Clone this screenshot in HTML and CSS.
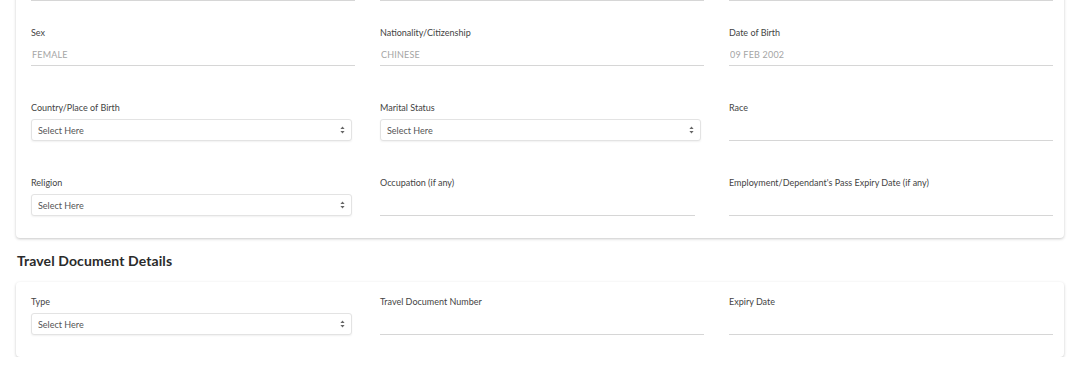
FILE: index.html
```html
<!DOCTYPE html>
<html lang="en">
<head>
  <meta charset="UTF-8" />
  <title>Applicant Particulars</title>
  <link rel="stylesheet" href="styles.css">
</head>
<body>

<!-- Personal particulars (scrolled, top row cut off) -->
<div class="card card-top">
  <div class="form-grid form-grid-cut">
    <div class="field"><span class="label-gap"></span><input type="text" class="line-input"></div>
    <div class="field"><span class="label-gap"></span><input type="text" class="line-input"></div>
    <div class="field"><span class="label-gap"></span><input type="text" class="line-input"></div>
  </div>

  <div class="form-grid">
    <div class="field">
      <label>Sex</label>
      <input type="text" class="line-input" value="FEMALE" readonly>
    </div>
    <div class="field">
      <label>Nationality/Citizenship</label>
      <input type="text" class="line-input" value="CHINESE" readonly>
    </div>
    <div class="field">
      <label>Date of Birth</label>
      <input type="text" class="line-input" value="09 FEB 2002" readonly>
    </div>

    <div class="field">
      <label>Country/Place of Birth</label>
      <div class="select-wrap">
        <select><option>Select Here</option></select>
        <svg class="caret" width="5" height="8" viewBox="0 0 5 8"><path d="M2.5 0.5L4.6 3H0.4z M2.5 7.5L4.6 5H0.4z" fill="#666"/></svg>
      </div>
    </div>
    <div class="field">
      <label>Marital Status</label>
      <div class="select-wrap">
        <select><option>Select Here</option></select>
        <svg class="caret" width="5" height="8" viewBox="0 0 5 8"><path d="M2.5 0.5L4.6 3H0.4z M2.5 7.5L4.6 5H0.4z" fill="#666"/></svg>
      </div>
    </div>
    <div class="field">
      <label>Race</label>
      <input type="text" class="line-input">
    </div>

    <div class="field">
      <label>Religion</label>
      <div class="select-wrap">
        <select><option>Select Here</option></select>
        <svg class="caret" width="5" height="8" viewBox="0 0 5 8"><path d="M2.5 0.5L4.6 3H0.4z M2.5 7.5L4.6 5H0.4z" fill="#666"/></svg>
      </div>
    </div>
    <div class="field">
      <label>Occupation (if any)</label>
      <input type="text" class="line-input short">
    </div>
    <div class="field">
      <label>Employment/Dependant's Pass Expiry Date (if any)</label>
      <input type="text" class="line-input">
    </div>
  </div>
</div>

<h4 class="section-title">Travel Document Details</h4>

<div class="card">
  <div class="form-grid">
    <div class="field">
      <label>Type</label>
      <div class="select-wrap">
        <select><option>Select Here</option></select>
        <svg class="caret" width="5" height="8" viewBox="0 0 5 8"><path d="M2.5 0.5L4.6 3H0.4z M2.5 7.5L4.6 5H0.4z" fill="#666"/></svg>
      </div>
    </div>
    <div class="field">
      <label>Travel Document Number</label>
      <input type="text" class="line-input">
    </div>
    <div class="field">
      <label>Expiry Date</label>
      <input type="text" class="line-input">
    </div>
  </div>
</div>

</body>
</html>
```

FILE: styles.css
```css
* { box-sizing: border-box; font-family: Lato, 'Open Sans', sans-serif; }
body {
  margin: 0;
  padding: 0 16px;
  background: #fff;
  color: #333;
  overflow: hidden;
}

.card {
  background: #fff;
  border-radius: 4px;
  box-shadow: 0 1px 3px rgba(0, 0, 0, 0.22);
  padding: 14px 11px 22px 15px;
}

.card-top {
  margin-top: -52px;
}

.form-grid {
  display: grid;
  grid-template-columns: repeat(3, 324px);
  column-gap: 25px;
  row-gap: 36px;
}

.form-grid-cut {
  margin-bottom: 26px;
}

.field label,
.field .label-gap {
  display: block;
  font-size: 9px;
  line-height: 12px;
  height: 12px;
  margin-bottom: 5px;
  color: #444;
  white-space: nowrap;
}

.line-input {
  display: block;
  width: 100%;
  height: 22px;
  padding: 0 1px;
  border: none;
  border-bottom: 1px solid #d6d6d6;
  background: transparent;
  font-size: 9px;
  letter-spacing: 0.2px;
  color: #a5a5a5;
  outline: none;
}

.line-input.short {
  width: calc(100% - 9px);
}

.select-wrap {
  position: relative;
  width: calc(100% - 3px);
}

.select-wrap select {
  display: block;
  width: 100%;
  height: 22px;
  padding: 0 6px;
  border: 1px solid #e3e3e3;
  border-radius: 3px;
  background: #fff;
  box-shadow: 0 1px 2px rgba(0, 0, 0, 0.06);
  font-size: 9px;
  color: #555;
  appearance: none;
  -webkit-appearance: none;
  outline: none;
}

.caret {
  position: absolute;
  right: 7px;
  top: 7px;
  pointer-events: none;
}

.section-title {
  margin: 15px 0 13px 1px;
  font-size: 14px;
  line-height: 16px;
  letter-spacing: 0.1px;
  font-weight: 700;
  color: #2b2b2b;
}
```
